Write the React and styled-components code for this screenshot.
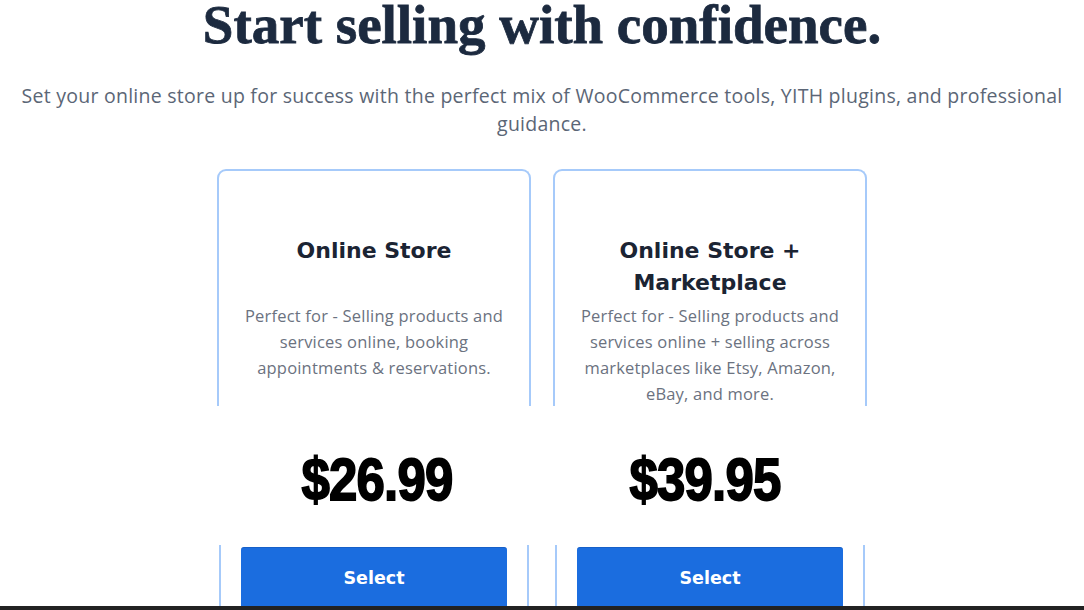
import React from "react";
import styled, { createGlobalStyle } from "styled-components";

const GlobalStyle = createGlobalStyle`
  html, body {
    margin: 0;
    padding: 0;
    background: #ffffff;
  }
  body {
    font-family: "Open Sans", "DejaVu Sans", sans-serif;
    overflow: hidden;
  }
`;

const StPage = styled.div`
  width: 1084px;
  height: 610px;
  display: flex;
  flex-direction: column;
  align-items: center;
  overflow: hidden;
`;

const StHeading = styled.h1`
  margin: -4px 0 0;
  font-family: "Liberation Serif", "DejaVu Serif", serif;
  font-weight: 700;
  font-size: 55px;
  line-height: 58px;
  color: #1c2a3f;
  -webkit-text-stroke: 0.8px #1c2a3f;
`;

const StSubtitle = styled.p`
  margin: 28px 0 0;
  width: 1050px;
  text-align: center;
  font-size: 19.5px;
  line-height: 28px;
  letter-spacing: 0.25px;
  color: #5b6676;
`;

const StCardGrid = styled.div`
  display: grid;
  grid-template-columns: repeat(2, ${(p) => p.$col}px);
  column-gap: ${(p) => p.$gap}px;
`;

const StCardTop = styled.div`
  height: 237px;
  margin-top: 31px;
  border: 2px solid #a6cafa;
  border-bottom: none;
  border-radius: 9px 9px 0 0;
  padding: 64px 20px 0;
  box-sizing: border-box;
  text-align: center;
`;

const StCardTitle = styled.h2`
  margin: 0;
  min-height: 64px;
  font-family: "DejaVu Sans", sans-serif;
  font-weight: 700;
  font-size: 22px;
  line-height: 32px;
  color: #1b2433;
`;

const StCardText = styled.p`
  margin: 4px 0 0;
  font-size: 16.5px;
  line-height: 26px;
  letter-spacing: 0.2px;
  color: #6b7280;
`;

const StPriceRow = styled.div`
  height: 140px;
  padding-top: 8px;
  box-sizing: border-box;
  display: grid;
  grid-template-columns: repeat(2, 314px);
  column-gap: 22px;
  align-items: center;
`;

const StPrice = styled.div`
  text-align: center;
  font-family: "Liberation Sans Narrow", "Liberation Sans", sans-serif;
  font-weight: 700;
  font-size: 60px;
  line-height: 1;
  color: #000000;
  -webkit-text-stroke: 1.8px #000000;
  letter-spacing: -1px;
  transform: translateX(${(p) => p.$shift}px) scaleX(0.85);
`;

const StCardBottom = styled.div`
  height: 61px;
  border-left: 2px solid #a6cafa;
  border-right: 2px solid #a6cafa;
  padding: 2px 20px 0;
  box-sizing: border-box;
`;

const StSelectButton = styled.button`
  width: 100%;
  height: 60px;
  border: none;
  border-top: 1px solid #1760c8;
  border-radius: 3px 3px 0 0;
  background: #1b6ddf;
  color: #ffffff;
  font-family: "DejaVu Sans", sans-serif;
  font-weight: 700;
  font-size: 17.5px;
  cursor: pointer;
`;

const StBottomBar = styled.div`
  width: 100%;
  height: 4px;
  background: #222222;
`;

const plans = [
  {
    title: "Online Store",
    text: "Perfect for - Selling products and services online, booking appointments & reservations.",
    price: "$26.99",
    shift: 3,
  },
  {
    title: "Online Store + Marketplace",
    text: "Perfect for - Selling products and services online + selling across marketplaces like Etsy, Amazon, eBay, and more.",
    price: "$39.95",
    shift: -5,
  },
];

function App() {
  return (
    <>
      <GlobalStyle />
      <StPage>
        <StHeading>Start selling with confidence.</StHeading>
        <StSubtitle>
          Set your online store up for success with the perfect mix of WooCommerce tools, YITH
          plugins, and professional guidance.
        </StSubtitle>

        <StCardGrid $col={314} $gap={22}>
          {plans.map((plan) => (
            <StCardTop key={plan.title}>
              <StCardTitle>{plan.title}</StCardTitle>
              <StCardText>{plan.text}</StCardText>
            </StCardTop>
          ))}
        </StCardGrid>

        <StPriceRow>
          {plans.map((plan) => (
            <StPrice key={plan.price} $shift={plan.shift}>
              {plan.price}
            </StPrice>
          ))}
        </StPriceRow>

        <StCardGrid $col={310} $gap={26}>
          {plans.map((plan) => (
            <StCardBottom key={plan.title}>
              <StSelectButton>Select</StSelectButton>
            </StCardBottom>
          ))}
        </StCardGrid>

        <StBottomBar />
      </StPage>
    </>
  );
}

export default App;
